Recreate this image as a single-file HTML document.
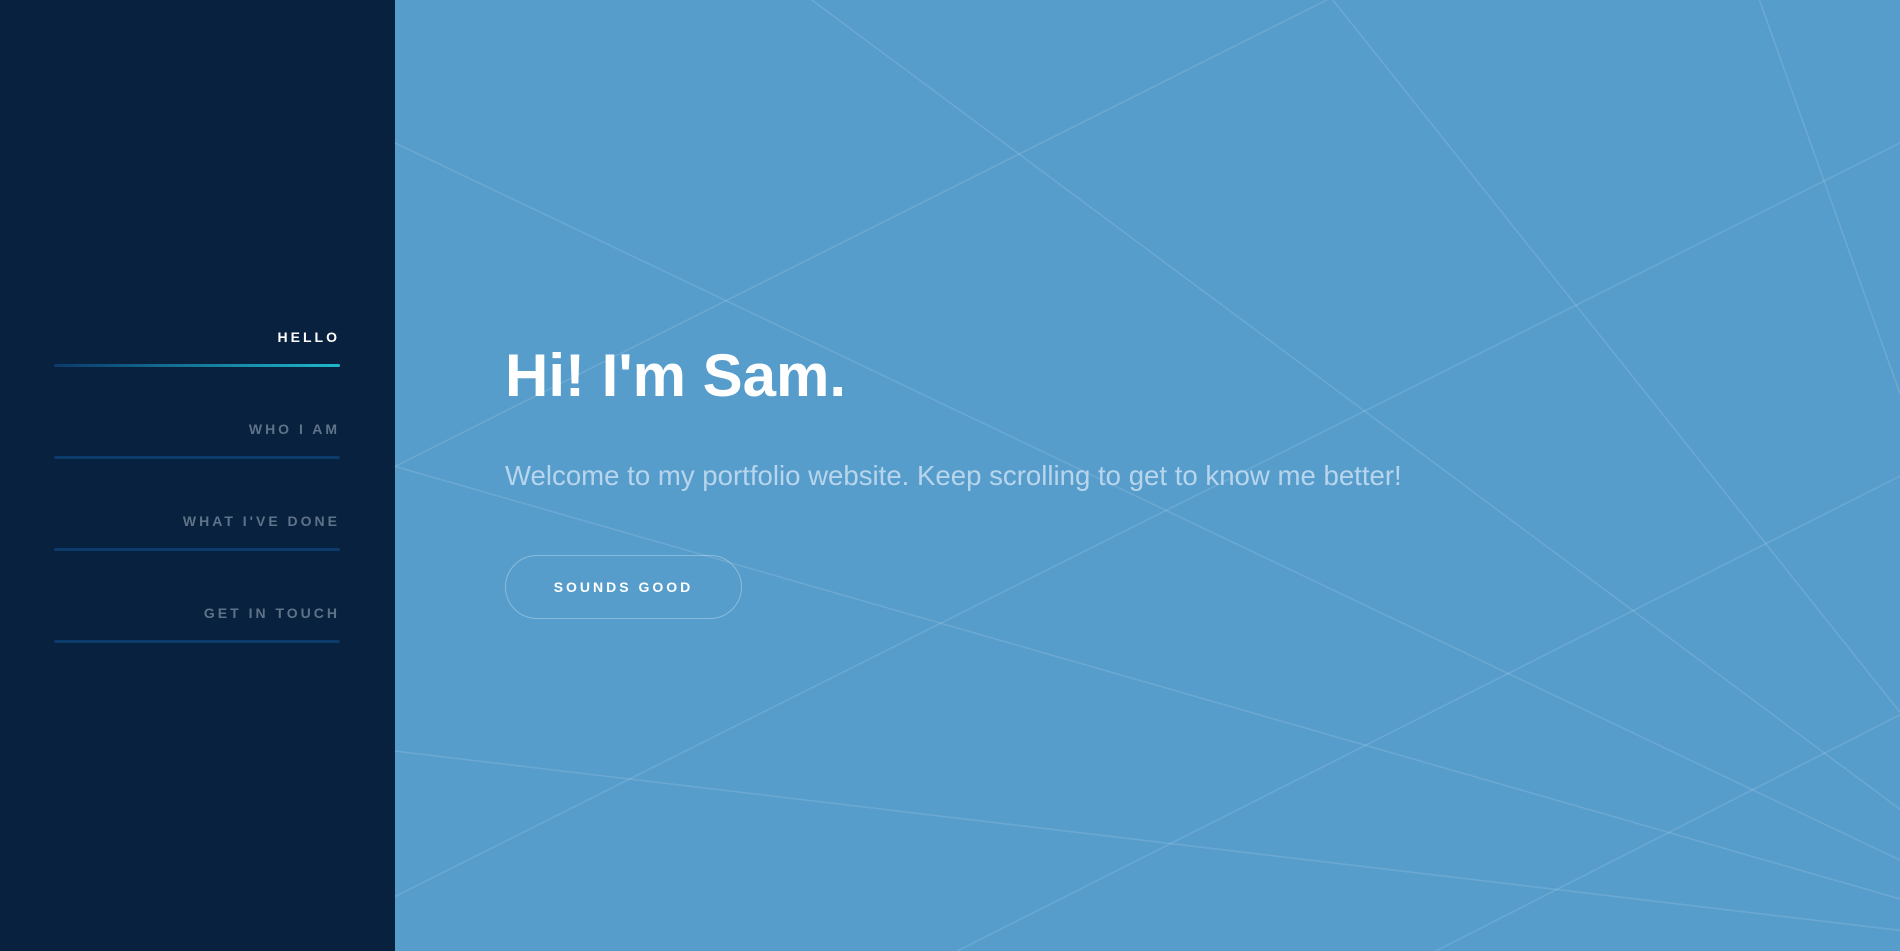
<!DOCTYPE html>
<html><head><meta charset="utf-8"><style>
html,body{margin:0;padding:0;width:1900px;height:951px;overflow:hidden;font-family:"Liberation Sans",sans-serif}
.side{position:absolute;left:0;top:0;width:395px;height:951px;background:#07213f}
.main{position:absolute;left:395px;top:0;width:1505px;height:951px;background:#579dcc}
svg{position:absolute;left:0;top:0}
.nav{position:absolute;left:54px;width:286px;text-align:right;font-size:14px;font-weight:bold;letter-spacing:3px;color:#5f7388;margin-right:-3px}
.bar{position:absolute;left:54px;width:286px;height:3px;background:#0b3a6b;border-radius:2px}
h1{position:absolute;left:505px;top:341px;margin:0;font-size:60px;line-height:70px;color:#fff;font-weight:bold}
p{position:absolute;left:505px;top:458px;margin:0;font-size:27.6px;line-height:36px;color:#b7d5ec}
.btn{position:absolute;left:505px;top:555px;width:237px;height:64px;border:1px solid rgba(255,255,255,.3);border-radius:32px;box-sizing:border-box;color:#fff;font-size:14px;font-weight:bold;letter-spacing:3px;text-align:center;line-height:62px}
</style></head><body>
<div class="main"></div>
<svg width="1900" height="951" viewBox="0 0 1568 785" preserveAspectRatio="none">
<g stroke="rgba(255,255,255,0.13)" stroke-width="1.2" fill="none">
<line x1="670" y1="0" x2="1568" y2="668"/>
<line x1="1100" y1="0" x2="1568" y2="588"/>
<line x1="1452" y1="0" x2="1568" y2="325"/>
<line x1="326" y1="118" x2="1568" y2="710"/>
<line x1="1095" y1="0" x2="326" y2="385"/>
<line x1="326" y1="385" x2="1568" y2="742"/>
<line x1="1568" y1="118" x2="326" y2="740"/>
<line x1="1568" y1="393" x2="790" y2="785"/>
<line x1="1568" y1="590" x2="1185" y2="785"/>
<line x1="326" y1="620" x2="1568" y2="768"/>
</g></svg>
<div class="side">
<div class="nav" style="top:329px;color:#fff">HELLO</div>
<div class="bar" style="top:364px;background:linear-gradient(90deg,#0b3a6b,#1fb8c9)"></div>
<div class="nav" style="top:421px">WHO I AM</div>
<div class="bar" style="top:456px"></div>
<div class="nav" style="top:513px">WHAT I'VE DONE</div>
<div class="bar" style="top:548px"></div>
<div class="nav" style="top:605px">GET IN TOUCH</div>
<div class="bar" style="top:640px"></div>
</div>
<h1>Hi! I'm Sam.</h1>
<p>Welcome to my portfolio website. Keep scrolling to get to know me better!</p>
<div class="btn">SOUNDS GOOD</div>
</body></html>
